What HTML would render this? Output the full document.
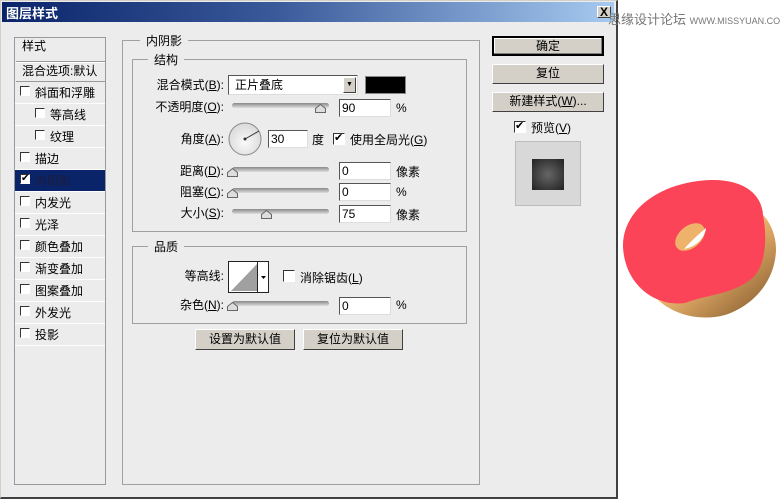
<!DOCTYPE html>
<html><head><meta charset="utf-8"><style>
*{margin:0;padding:0;box-sizing:border-box}
body{width:780px;height:500px;background:#fff;position:relative;overflow:hidden;font-family:"Liberation Sans","Noto Sans CJK SC",sans-serif;font-size:12px;color:#000}
.a{position:absolute;white-space:nowrap}
.dlg{left:0;top:0;width:618px;height:499px;background:#ececec;border:1px solid #d4d0c8;border-right:2px solid #404040;border-bottom:2px solid #404040}
.title{left:2px;top:2px;width:612px;height:20px;background:linear-gradient(90deg,#0a246a,#3a5a9a 45%,#a6caf0)}
.title span{position:absolute;left:4px;top:1px;color:#fff;font-weight:bold;font-size:13px}
.box{border:1px solid #999;}
.li{position:absolute;left:1px;width:89px;height:22px;border-bottom:1px solid #fff;line-height:20px;font-size:12px}
.cb{position:absolute;width:10px;height:10px;border:1px solid #333;border-right-color:#fff;border-bottom-color:#fff;background:#fff}
.grp{border:1px solid #a0a0a0}
.leg{position:absolute;background:#ececec;padding:0 6px;font-size:12px}
.lbl{position:absolute;text-align:right;width:100px;font-size:12px;line-height:14px}
.trk{position:absolute;height:5px;width:97px;border-radius:3px;background:linear-gradient(#888,#ddd);}
.inp{position:absolute;width:52px;height:18px;background:#fff;border:1px solid #555;border-right-color:#ddd;border-bottom-color:#ddd;padding-left:2px;font-size:12px;line-height:16px}
.btn{position:absolute;background:#d4d0c8;border:1px solid;border-color:#fff #404040 #404040 #fff;text-align:center;font-size:12px;line-height:17px}
</style></head><body>
<div class="a dlg"></div>
<div class="a title"><span>图层样式</span></div>
<div class="a" style="left:597px;top:6px;width:14px;height:12px;background:#d4d0c8;border:1px solid;border-color:#fff #404040 #404040 #fff;font-weight:bold;font-size:12px;line-height:10px;text-align:center">X</div>
<div class="a" style="left:608px;top:9px;font-size:13px;color:#777">思缘设计论坛 <span style="font-size:9px">WWW.MISSYUAN.COM</span></div>

<div class="a box" style="left:14px;top:37px;width:92px;height:448px">
<div class="li" style="top:0;height:24px;padding-left:6px;border-bottom:1px solid #999;line-height:16px">样式</div>
<div class="li" style="top:24px;padding-left:6px;height:20px;line-height:17px;border-top:1px solid #fff;border-bottom:1px solid #999">混合选项:默认</div>
</div>
<div id="L"></div>

<div class="a grp" style="left:122px;top:40px;width:358px;height:445px"></div>
<div class="leg" style="left:140px;top:32px">内阴影</div>
<div class="a grp" style="left:132px;top:59px;width:335px;height:173px"></div>
<div class="leg" style="left:148px;top:51px">结构</div>

<div class="lbl" style="left:124px;top:78px">混合模式(<u>B</u>):</div>
<div class="a" style="left:228px;top:75px;width:130px;height:20px;background:#fff;border:1px solid #555;border-right-color:#ddd;border-bottom-color:#ddd;padding-left:6px;line-height:18px">正片叠底</div>
<div class="a" style="left:343px;top:77px;width:13px;height:16px;background:#d4d0c8;border:1px solid;border-color:#fff #404040 #404040 #fff;font-size:7px;text-align:center;line-height:14px">▼</div>
<div class="a" style="left:365px;top:76px;width:41px;height:18px;background:#000;border:1px solid #888"></div>

<div class="lbl" style="left:124px;top:100px">不透明度(<u>O</u>):</div>
<div class="lbl" style="left:124px;top:132px">角度(<u>A</u>):</div>
<div class="lbl" style="left:124px;top:164px">距离(<u>D</u>):</div>
<div class="lbl" style="left:124px;top:185px">阻塞(<u>C</u>):</div>
<div class="lbl" style="left:124px;top:206px">大小(<u>S</u>):</div>

<div class="trk" style="left:232px;top:103px"></div>
<div class="trk" style="left:232px;top:167px"></div>
<div class="trk" style="left:232px;top:188px"></div>
<div class="trk" style="left:232px;top:209px"></div>
<div class="trk" style="left:232px;top:301px"></div>
<svg class="a" style="left:0;top:0" width="480" height="320">
<g fill="#ddd" stroke="#666" stroke-width="1">
<path d="M315.5 112.5 v-4 l5-4 5 4 v4z"/>
<path d="M227.5 176.5 v-4 l5-4 5 4 v4z"/>
<path d="M227.5 197.5 v-4 l5-4 5 4 v4z"/>
<path d="M261.5 218.5 v-4 l5-4 5 4 v4z"/>
<path d="M227.5 310.5 v-4 l5-4 5 4 v4z"/>
</g>
<defs><radialGradient id="dg" cx="0.5" cy="0.6" r="0.6"><stop offset="0" stop-color="#fafafa"/><stop offset="1" stop-color="#d8d8d8"/></radialGradient></defs>
<circle cx="245" cy="139" r="16" fill="url(#dg)" stroke="#888"/>
<line x1="245" y1="139" x2="259" y2="131" stroke="#333" stroke-width="1"/>
<circle cx="245" cy="139" r="1.5" fill="#333"/>
</svg>
<div class="inp" style="left:339px;top:99px">90</div><div class="a" style="left:396px;top:101px">%</div>
<div class="inp" style="left:268px;top:130px;width:40px">30</div><div class="a" style="left:312px;top:131px">度</div>
<div class="cb" style="left:333px;top:133px;width:12px;height:12px;font-size:11px;line-height:9px">✔</div>
<div class="a" style="left:350px;top:131px">使用全局光(<u>G</u>)</div>
<div class="inp" style="left:339px;top:162px">0</div><div class="a" style="left:396px;top:163px">像素</div>
<div class="inp" style="left:339px;top:183px">0</div><div class="a" style="left:396px;top:185px">%</div>
<div class="inp" style="left:339px;top:205px">75</div><div class="a" style="left:396px;top:206px">像素</div>

<div class="a grp" style="left:132px;top:246px;width:335px;height:78px"></div>
<div class="leg" style="left:148px;top:238px">品质</div>
<div class="lbl" style="left:124px;top:269px">等高线:</div>
<div class="a" style="left:228px;top:261px;width:41px;height:32px;background:#fff;border:1px solid #222"></div>
<svg class="a" style="left:229px;top:262px" width="40" height="30"><path d="M2 29 L28 2 V29Z" fill="#a0a0a0"/><line x1="28.5" y1="0" x2="28.5" y2="30" stroke="#222"/><path d="M32 14h5l-2.5 3z" fill="#000"/></svg>
<div class="cb" style="left:283px;top:270px;width:12px;height:12px"></div>
<div class="a" style="left:300px;top:269px">消除锯齿(<u>L</u>)</div>
<div class="lbl" style="left:124px;top:298px">杂色(<u>N</u>):</div>
<div class="inp" style="left:339px;top:297px">0</div><div class="a" style="left:396px;top:298px">%</div>

<div class="btn" style="left:195px;top:329px;width:100px;height:21px;line-height:19px">设置为默认值</div>
<div class="btn" style="left:303px;top:329px;width:100px;height:21px;line-height:19px">复位为默认值</div>

<div class="btn" style="left:492px;top:36px;width:112px;height:20px;border:2px solid #000;box-shadow:inset -1px -1px #808080,inset 1px 1px #fff">确定</div>
<div class="btn" style="left:492px;top:64px;width:112px;height:20px">复位</div>
<div class="btn" style="left:492px;top:92px;width:112px;height:20px">新建样式(<u>W</u>)...</div>
<div class="cb" style="left:514px;top:121px;width:12px;height:12px;font-size:11px;line-height:9px">✔</div>
<div class="a" style="left:531px;top:119px">预览(<u>V</u>)</div>
<div class="a" style="left:515px;top:141px;width:66px;height:65px;background:#d8d8d8;border:1px solid #bbb"></div>
<div class="a" style="left:532px;top:159px;width:32px;height:31px;background:radial-gradient(#666,#222)"></div>

<svg class="a" style="left:610px;top:170px" width="170" height="160">
<defs><linearGradient id="b" x1="0" y1="0" x2="1" y2="1"><stop offset="0.45" stop-color="#f0b870"/><stop offset="1" stop-color="#7a5228"/></linearGradient></defs>
<path d="M38 118 C55 145 90 152 115 145 C145 135 165 110 166 80 C166 65 160 52 153 45 L38 118Z" fill="url(#b)"/>
<path d="M13 77 C12 40 50 12 100 10 C135 9 152 25 153 45 C158 70 155 100 140 110 C120 125 95 125 75 133 C45 137 15 115 13 77Z" fill="#fb4457"/>
<ellipse cx="80" cy="67" rx="17" ry="11" transform="rotate(-40 80 67)" fill="#efb26a"/>
<path d="M74 79 C82 70 90 63 96 58 C95 68 86 77 74 79Z" fill="#fff"/>
</svg>

<script>
var it=[["斜面和浮雕",0],["等高线",1],["纹理",1],["描边",0],["内阴影",0,1],["内发光",0],["光泽",0],["颜色叠加",0],["渐变叠加",0],["图案叠加",0],["外发光",0],["投影",0]];
var h="";
it.forEach(function(e,i){var y=82+i*22;var sel=e[2];var x=e[1]?35:20;
h+='<div class="a" style="left:15px;top:'+(y)+'px;width:90px;height:22px;border-bottom:1px solid #fff;'+(sel?'background:#0a246a;':'')+'"></div>';
h+='<div class="cb" style="left:'+x+'px;top:'+(y+4)+'px;font-size:10px;line-height:8px">'+(sel?'✔':'')+'</div>';
h+='<div class="a" style="left:'+(x+15)+'px;top:'+(y+3)+'px;line-height:16px;'+(sel?'color:#1c1c3c;':'')+'">'+e[0]+'</div>';});
document.getElementById("L").innerHTML=h;
</script>
</body></html>
